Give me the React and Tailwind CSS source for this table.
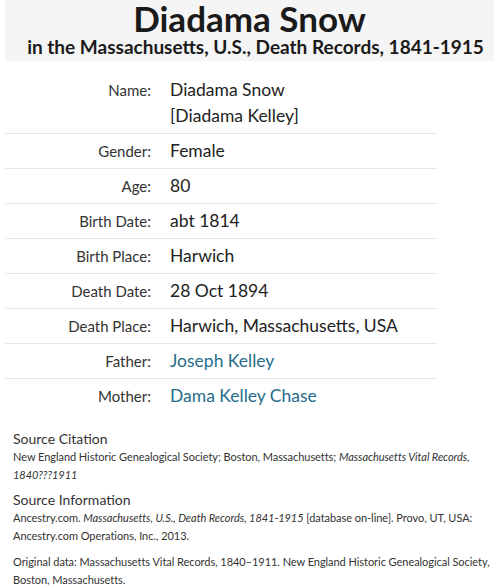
import React from 'react'

const rows = [
  { label: 'Name', value: ['Diadama Snow', '[Diadama Kelley]'] },
  { label: 'Gender', value: ['Female'] },
  { label: 'Age', value: ['80'] },
  { label: 'Birth Date', value: ['abt 1814'] },
  { label: 'Birth Place', value: ['Harwich'] },
  { label: 'Death Date', value: ['28 Oct 1894'] },
  { label: 'Death Place', value: ['Harwich, Massachusetts, USA'] },
  { label: 'Father', value: ['Joseph Kelley'], link: true },
  { label: 'Mother', value: ['Dama Kelley Chase'], link: true },
]

const App = () => {
  return (
    <div className="w-[495px] h-[588px] bg-white text-[#222] overflow-hidden" style={{ fontFamily: 'Lato, "Open Sans", sans-serif' }}>
      {/* header */}
      <div className="ml-[5px] mr-[1px] h-[61px] bg-[#f5f5f5] flex flex-col items-center">
        <h1 className="mt-[-2px] mb-[-2px] text-[35px] leading-[40px] font-bold text-[#1a1a1a]">Diadama Snow</h1>
        <h2 className="ml-[12px] text-[19px] leading-[22px] font-bold text-[#1a1a1a]">in the Massachusetts, U.S., Death Records, 1841-1915</h2>
      </div>

      {/* record table */}
      <div className="ml-[5px] w-[432px] mt-[12px]">
        {rows.map((row, i) => (
          <div
            key={row.label}
            className={`flex py-[4px] ${i < rows.length - 1 ? 'border-b border-[#e6e6e6]' : ''}`}
          >
            <div className="w-[146px] text-right text-[15px] leading-[26px] text-[#333]">{row.label}:</div>
            <div className="ml-[19px] text-[17.5px] leading-[26px]">
              {row.value.map(v => (
                <div key={v} className={row.link ? 'text-[#256d8a]' : 'text-[#222]'}>{v}</div>
              ))}
            </div>
          </div>
        ))}
      </div>

      {/* source info */}
      <div className="px-[13px] mt-[17px] text-[#333] whitespace-nowrap">
        <div className="text-[14px] leading-[18px]">Source Citation</div>
        <p className="text-[11px] leading-[18px] tracking-[-0.05px]">
          New England Historic Genealogical Society; Boston, Massachusetts; <i>Massachusetts Vital Records,</i>
          <br />
          <i>1840???1911</i>
        </p>
        <div className="mt-[7px] text-[14px] leading-[18px]">Source Information</div>
        <p className="text-[11px] leading-[18px] tracking-[-0.05px]">
          Ancestry.com. <i>Massachusetts, U.S., Death Records, 1841-1915</i> [database on-line]. Provo, UT, USA:
          <br />
          Ancestry.com Operations, Inc., 2013.
        </p>
        <p className="mt-[8px] text-[11px] leading-[18px] tracking-[-0.05px]">
          Original data: Massachusetts Vital Records, 1840–1911. New England Historic Genealogical Society,
          <br />
          Boston, Massachusetts.
        </p>
      </div>
    </div>
  )
}

export default App
